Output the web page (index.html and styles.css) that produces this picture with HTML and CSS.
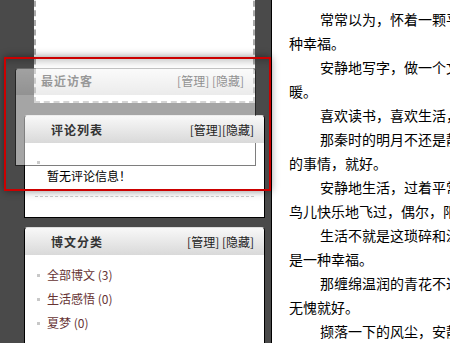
FILE: index.html
```html
<!DOCTYPE html>
<html lang="zh-CN">
<head>
<meta charset="utf-8">
<title>博客</title>
<link rel="stylesheet" href="styles.css">
</head>
<body>
<div class="page">
  <aside class="sidebar">
    <div class="placeholder"></div>
    <section class="mod">
      <div class="mod-hd"><h3>评论列表</h3><span class="ops">[管理][隐藏]</span></div>
      <div class="mod-bd comments-bd">
        <ul class="list-plain"><li>暂无评论信息！</li></ul>
      </div>
    </section>
    <section class="mod">
      <div class="mod-hd"><h3>博文分类</h3><span class="ops">[管理] [隐藏]</span></div>
      <div class="mod-bd cats-bd">
        <ul class="list-bullet">
          <li><a href="#">全部博文 (3)</a></li>
          <li><a href="#">生活感悟 (0)</a></li>
          <li><a href="#">夏梦 (0)</a></li>
        </ul>
      </div>
    </section>
  </aside>
  <main class="content">
    <p class="cont">子，我想，这便是生活最真实的样子。</p>
    <p>常常以为，怀着一颗平淡的心，看云卷云舒，便是一<br>种幸福。</p>
    <p>安静地写字，做一个文字里的女子，把心事写成温<br>暖。</p>
    <p>喜欢读书，喜欢生活，喜欢一切美好的事物。</p>
    <p>那秦时的明月不还是静静地照着今天，做好自己<br>的事情，就好。</p>
    <p>安静地生活，过着平常的日子，看花儿开了又谢，<br>鸟儿快乐地飞过，偶尔，阳光洒满窗台。</p>
    <p>生活不就是这琐碎和温暖吗，平淡中的点滴，便<br>是一种幸福。</p>
    <p>那缠绵温润的青花不过是一场旧梦，只要问心<br>无愧就好。</p>
    <p>撷落一下的风尘，安静地走过每一天。</p>
  </main>
  <section class="mod mod-drag">
    <div class="mod-hd drag-hd"><h3>最近访客</h3><span class="ops">[管理] [隐藏]</span></div>
    <div class="drag-bd"><span class="drag-dot"></span></div>
  </section>
  <div class="drop-hint"></div>
</div>
</body>
</html>
```

FILE: styles.css
```css
* { box-sizing: border-box; }
body {
  margin: 0;
  font: 12px/1.5 "Noto Sans CJK SC", "Liberation Sans", sans-serif;
  color: #333;
  background: #fff;
}
ul { margin: 0; padding: 0; list-style: none; }
a { color: #663333; text-decoration: none; }

.page {
  position: relative;
  display: flex;
  height: 343px;
  overflow: hidden;
}

.sidebar {
  flex: none;
  width: 272px;
  background: #4a4a4a;
  border-right: 1px solid #000;
  padding: 0 6px 0 24px;
}

.placeholder {
  height: 112px;
  margin: -9px 10px 12px;
  border: 2px dashed #aaa;
  background: #fff;
}

.mod {
  border: 1px solid #000;
  border-top-color: #dcdcdc;
  border-radius: 4px 4px 0 0;
  background: #fff;
  margin-bottom: 9px;
}

.mod-hd {
  position: relative;
  z-index: 2;
  height: 27px;
  display: flex;
  align-items: center;
  justify-content: space-between;
  padding: 0 10px 0 26px;
  background: linear-gradient(#f8f8f8, #d9d9d9);
  border-radius: 3px 3px 0 0;
}
.mod-hd h3 {
  margin: 0;
  font-size: 12px;
  font-weight: bold;
  letter-spacing: 1px;
  color: #333;
}
.ops { color: #222; }

.comments-bd { padding: 21px 10px 20px; }
.list-plain li {
  padding: 0 0 8px 12px;
  line-height: 24px;
  color: #000;
  border-bottom: 1px dashed #ccc;
}

.cats-bd { padding: 8px 10px 20px; }
.list-bullet li {
  display: flex;
  align-items: center;
  line-height: 24px;
}
.list-bullet li::before {
  content: "";
  width: 3px;
  height: 3px;
  background: #c8c8c8;
  margin: 0 7px 0 2px;
}

.content {
  flex: 1;
  min-width: 0;
  margin-top: -17px;
  padding-left: 17px;
  font-size: 14px;
  line-height: 24px;
  color: #000;
  white-space: nowrap;
  overflow: hidden;
}
.content p { margin: 0; text-indent: 31px; }
.content p.cont { text-indent: 4px; margin: -4px 0 4px; }

/* dragged module helper */
.mod-drag {
  position: absolute;
  left: 15px;
  top: 68px;
  width: 241px;
  height: 98px;
  margin: 0;
  opacity: 0.5;
  z-index: 1;
  border-top-color: #888;
}
.drag-hd {
  height: 26px;
  padding: 0 11px 3px 25px;
}
.drag-bd { padding: 66px 0 0 21px; }
.drag-dot {
  display: block;
  width: 3px;
  height: 3px;
  background: #999;
}

.drop-hint {
  position: absolute;
  left: 4px;
  top: 57px;
  width: 267px;
  height: 134px;
  border: 2px solid #c00;
  box-shadow: 0 0 8px rgba(0, 0, 0, 0.45), inset 0 9px 8px -7px rgba(0, 0, 0, 0.25);
  z-index: 5;
}
```
